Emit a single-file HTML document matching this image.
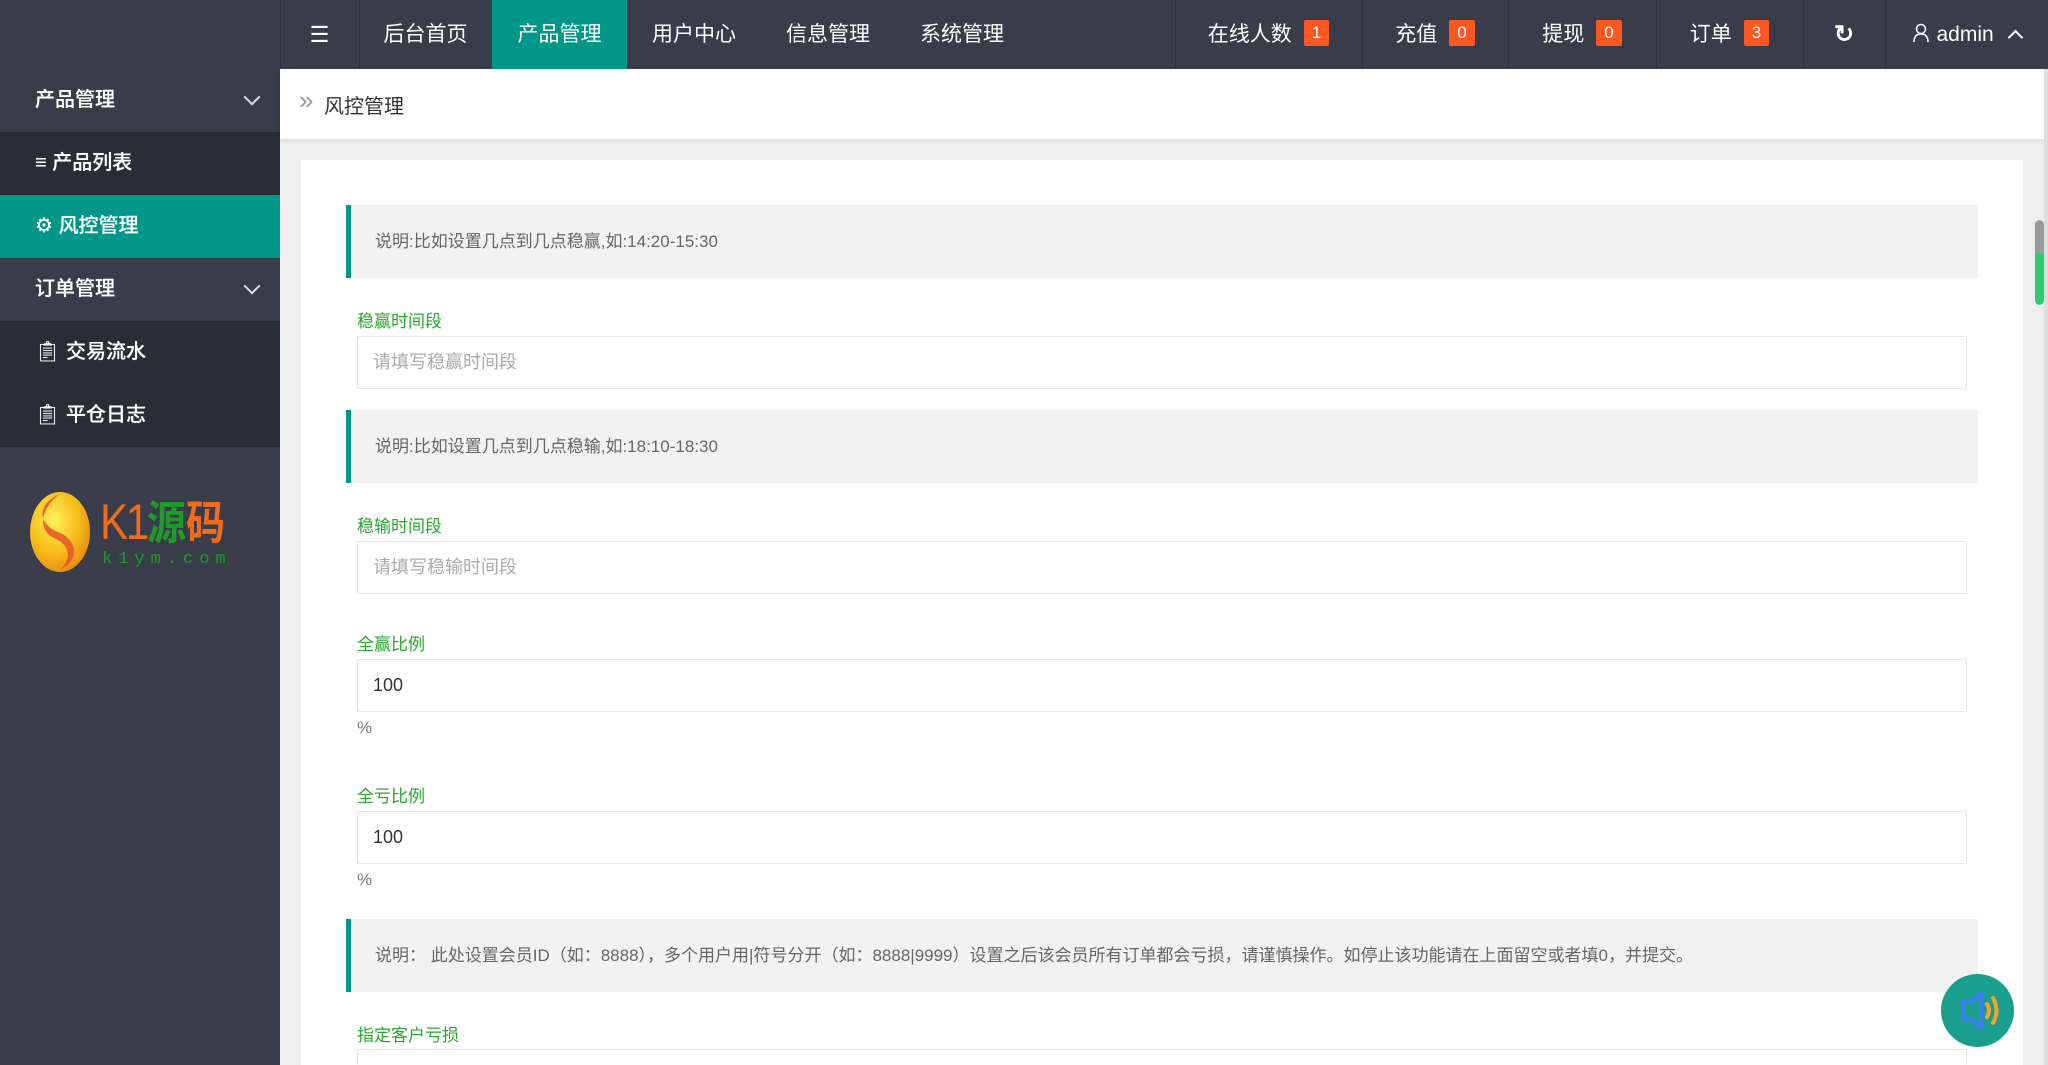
<!DOCTYPE html>
<html><head><meta charset="utf-8"><style>
*{margin:0;padding:0;box-sizing:border-box}
html{width:2048px;height:1065px;overflow:hidden}
body{width:2048px;height:1065px;overflow:hidden;background:#eeeeee;font-family:"Liberation Sans","Noto Sans CJK SC",sans-serif;position:relative}
.abs{position:absolute}
#top{left:0;top:0;width:2048px;height:69px;background:#393d49}
.nav{position:absolute;top:0;height:69px;line-height:69px;color:#fff;font-size:21px;text-align:center}
.sep{position:absolute;top:0;width:1px;height:69px;background:#2f323c}
.badge{display:inline-block;background:#ff5722;color:#fff;font-size:17px;line-height:26px;height:26px;padding:0 8px;border-radius:2px;vertical-align:middle;margin-left:12px;position:relative;top:-2px}
#side{left:0;top:69px;width:280px;height:996px;background:#393d49}
.si{position:absolute;left:0;width:280px;height:63px;line-height:63px;color:#fff;font-size:20px;padding-left:35px;font-weight:500;text-shadow:0 0 0.5px #fff}
.dark{background:#2a2d36}
.chev{position:absolute;right:22px;top:22px;width:12px;height:12px;border-right:2px solid #ddd;border-bottom:2px solid #ddd;transform:rotate(45deg)}
#crumb{left:280px;top:69px;width:1764px;height:70px;background:#fff;box-shadow:0 2px 4px rgba(0,0,0,.08)}
#card{left:301px;top:160px;width:1722px;height:905px;background:#fff}
.note{position:absolute;left:346px;width:1632px;background:#f2f2f2;border-left:5px solid #009688;color:#666;font-size:17px;padding-left:24px}
.lbl{position:absolute;left:357px;color:#2aa52e;font-size:17px}
.inp{position:absolute;left:357px;width:1610px;border:1px solid #e6e6e6;border-radius:2px;background:#fff;font-size:18px;padding-left:15px}
.pct{position:absolute;left:357px;color:#777;font-size:17px}
</style></head><body>
<div id="top" class="abs"></div>
<div class="sep" style="left:280px"></div>
<div class="nav" style="left:280px;width:79px;font-size:22px">☰</div>
<div class="sep" style="left:359px"></div>
<div class="nav" style="left:359px;width:133px">后台首页</div>
<div class="nav" style="left:492px;width:135px;background:#009688">产品管理</div>
<div class="nav" style="left:627px;width:134px">用户中心</div>
<div class="nav" style="left:761px;width:134px">信息管理</div>
<div class="nav" style="left:895px;width:134px">系统管理</div>
<div class="sep" style="left:1175px"></div>
<div class="nav" style="left:1175px;width:187px">在线人数<span class="badge">1</span></div>
<div class="sep" style="left:1362px"></div>
<div class="nav" style="left:1362px;width:146px">充值<span class="badge">0</span></div>
<div class="sep" style="left:1508px"></div>
<div class="nav" style="left:1508px;width:148px">提现<span class="badge">0</span></div>
<div class="sep" style="left:1656px"></div>
<div class="nav" style="left:1656px;width:147px">订单<span class="badge">3</span></div>
<div class="sep" style="left:1803px"></div>
<div class="nav" style="left:1803px;width:82px;font-size:24px;font-weight:bold">&#x21bb;</div>
<div class="sep" style="left:1885px"></div>
<div class="nav" style="left:1885px;width:163px"><svg width="18" height="20" viewBox="0 0 18 20" style="vertical-align:middle;margin-right:6px;position:relative;top:-2px"><circle cx="9" cy="6" r="4.5" fill="none" stroke="#fff" stroke-width="1.6"/><path d="M2 19 Q2 11 9 11 Q16 11 16 19" fill="none" stroke="#fff" stroke-width="1.6"/></svg>admin <span style="display:inline-block;width:11px;height:11px;border-left:2px solid #fff;border-top:2px solid #fff;transform:rotate(45deg);margin-left:10px;position:relative;top:2px"></span></div>

<div id="side" class="abs"></div>
<div class="si" style="top:69px">产品管理<span class="chev"></span></div>
<div class="si dark" style="top:132px">&#x2261; 产品列表</div>
<div class="si" style="top:195px;background:#009688">&#x2699; 风控管理</div>
<div class="si" style="top:258px">订单管理<span class="chev"></span></div>
<div class="si dark" style="top:321px">&#x1F4CB;&#xFE0E; 交易流水</div>
<div class="si dark" style="top:384px">&#x1F4CB;&#xFE0E; 平仓日志</div>
<svg class="abs" style="left:28px;top:490px" width="64" height="84" viewBox="0 0 64 84"><defs><radialGradient id="g" cx="40%" cy="35%" r="70%"><stop offset="0" stop-color="#fff25a"/><stop offset=".6" stop-color="#f6bb18"/><stop offset="1" stop-color="#e88a10"/></radialGradient></defs><ellipse cx="32" cy="42" rx="30" ry="40" fill="url(#g)"/><path d="M32 4 C8 14 10 34 30 42 C50 50 52 70 32 80 C46 66 40 54 26 48 C8 40 14 16 32 4Z" fill="#e5532a" opacity=".85"/></svg>
<div class="abs" style="left:100px;top:492px;font-size:50px;line-height:56px;font-family:'Liberation Sans',sans-serif;color:#f26a1b;letter-spacing:-3px;transform:scaleX(.85);transform-origin:left">K1<span style="color:#1f9a2a;font-family:'Noto Sans CJK SC',sans-serif;font-weight:bold;font-size:46px;letter-spacing:0">源</span><span style="font-family:'Noto Sans CJK SC',sans-serif;font-weight:bold;font-size:46px;letter-spacing:0">码</span></div>
<div class="abs" style="left:102px;top:550px;font-size:17px;color:#1f9a2a;letter-spacing:6px;font-family:'Liberation Mono',monospace">k1ym.com</div>

<div id="crumb" class="abs"><span class="abs" style="left:19px;top:16px;font-size:26px;color:#999">»</span><span class="abs" style="left:44px;top:21px;font-size:20px;color:#333">风控管理</span></div>
<div id="card" class="abs"></div>
<div class="abs" style="left:2035px;top:220px;width:9px;height:85px;border-radius:5px;background:linear-gradient(#999 40%,#2ecc71 40%)"></div>
<div class="abs" style="left:2044px;top:69px;width:4px;height:996px;background:#ddd"></div>

<div class="note" style="top:205px;height:73px;line-height:73px">说明:比如设置几点到几点稳赢,如:14:20-15:30</div>
<div class="lbl" style="top:307px">稳赢时间段</div>
<div class="inp" style="top:336px;height:53px;line-height:51px;color:#aaa">请填写稳赢时间段</div>
<div class="note" style="top:410px;height:73px;line-height:73px">说明:比如设置几点到几点稳输,如:18:10-18:30</div>
<div class="lbl" style="top:512px">稳输时间段</div>
<div class="inp" style="top:541px;height:53px;line-height:51px;color:#aaa">请填写稳输时间段</div>
<div class="lbl" style="top:630px">全赢比例</div>
<div class="inp" style="top:659px;height:53px;line-height:51px;color:#333">100</div>
<div class="pct" style="top:718px">%</div>
<div class="lbl" style="top:782px">全亏比例</div>
<div class="inp" style="top:811px;height:53px;line-height:51px;color:#333">100</div>
<div class="pct" style="top:870px">%</div>
<div class="note" style="top:919px;height:73px;line-height:73px">说明： 此处设置会员ID（如：8888），多个用户用|符号分开（如：8888|9999）设置之后该会员所有订单都会亏损，请谨慎操作。如停止该功能请在上面留空或者填0，并提交。</div>
<div class="lbl" style="top:1021px">指定客户亏损</div>
<div class="inp" style="top:1049px;height:16px;border-bottom:none"></div>

<div class="abs" style="left:1941px;top:974px;width:73px;height:73px;border-radius:50%;background:#1a9f8e"></div>
<svg class="abs" style="left:1941px;top:974px" width="73" height="73" viewBox="0 0 73 73"><path d="M22 28 H30 L40 19 V54 L30 45 H22 Z" fill="none" stroke="#3a7ef0" stroke-width="4" stroke-linejoin="round"/><path d="M46 30 Q50 36.5 46 43" fill="none" stroke="#f3a52a" stroke-width="4" stroke-linecap="round"/><path d="M52 24 Q59 36.5 52 49" fill="none" stroke="#f3a52a" stroke-width="4" stroke-linecap="round"/></svg>
</body></html>
